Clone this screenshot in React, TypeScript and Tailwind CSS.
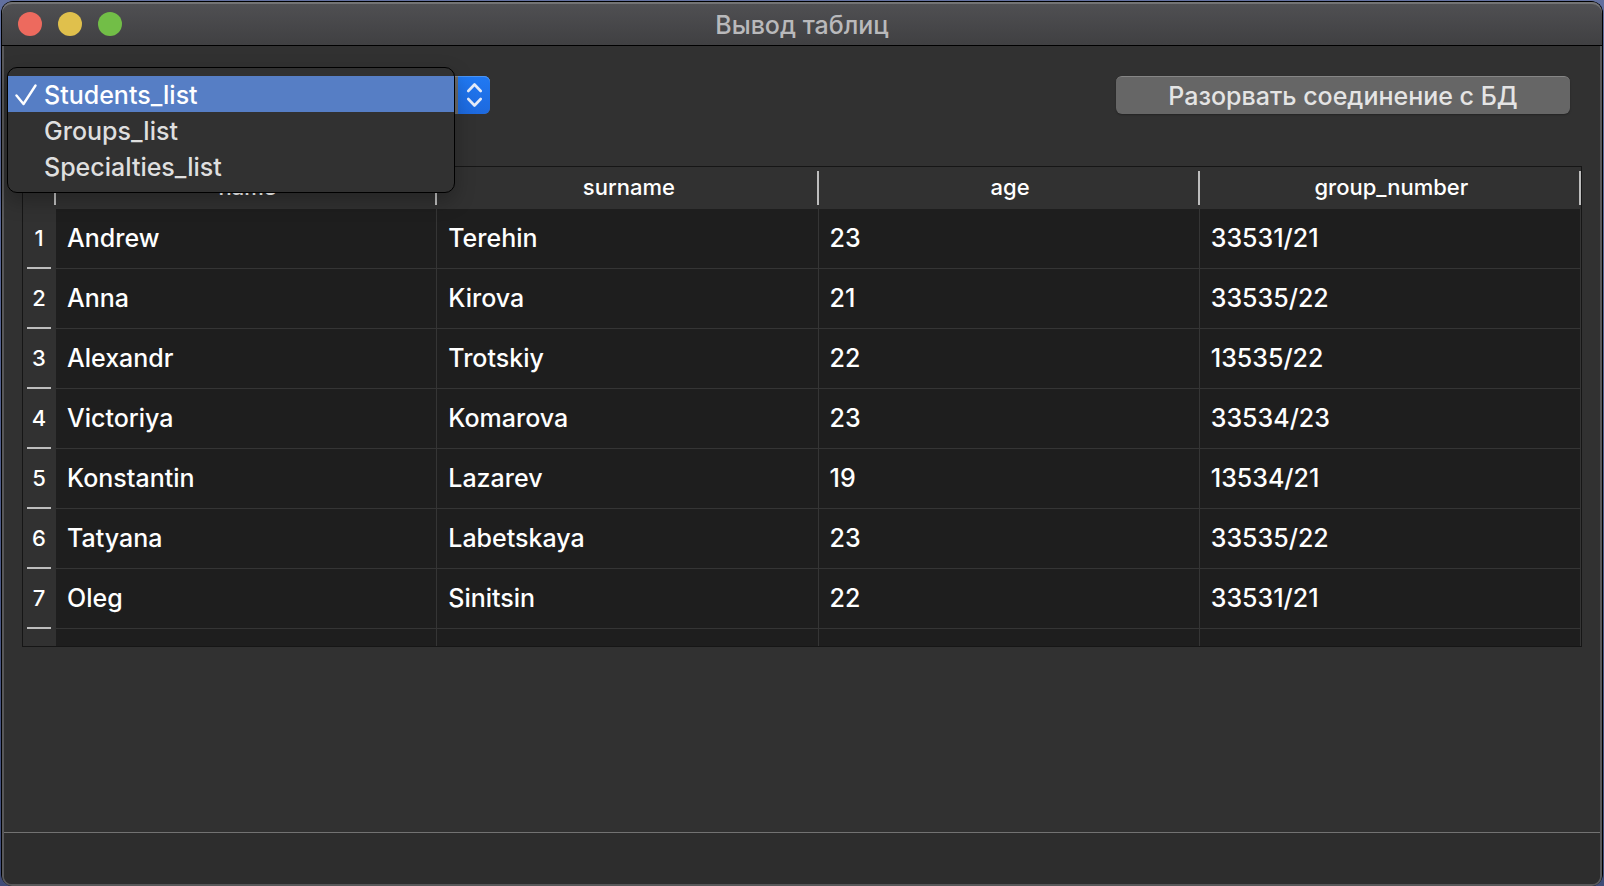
import { useState } from "react";

const tables = ["Students_list", "Groups_list", "Specialties_list"];

const columns = ["name", "surname", "age", "group_number"];

const students = [
  ["Andrew", "Terehin", "23", "33531/21"],
  ["Anna", "Kirova", "21", "33535/22"],
  ["Alexandr", "Trotskiy", "22", "13535/22"],
  ["Victoriya", "Komarova", "23", "33534/23"],
  ["Konstantin", "Lazarev", "19", "13534/21"],
  ["Tatyana", "Labetskaya", "23", "33535/22"],
  ["Oleg", "Sinitsin", "22", "33531/21"],
];

function TitleBar() {
  return (
    <header className="grid h-11 shrink-0 grid-cols-[1fr_auto_1fr] items-center rounded-t-[10px] border-b border-black bg-linear-to-b from-[#505053] to-[#404042] px-4 shadow-[inset_0_2px_0_#737375]">
      <div className="flex gap-4">
        <button aria-label="Закрыть" className="size-6 rounded-full bg-[#ed6a5e]" />
        <button aria-label="Свернуть" className="size-6 rounded-full bg-[#e0c04c]" />
        <button aria-label="Развернуть" className="size-6 rounded-full bg-[#72be47]" />
      </div>
      <h1 className="pt-0.5 text-[25px] leading-8 font-medium text-[#b9b9bb]">Вывод таблиц</h1>
    </header>
  );
}

function TablePicker() {
  const [selected, setSelected] = useState(tables[0]);
  return (
    <div className="relative w-[480px]">
      <select
        aria-label="Таблица"
        value={selected}
        onChange={(e) => setSelected(e.target.value)}
        className="block h-[38px] w-full appearance-none rounded-md border-t border-[#858585] bg-[#6b6b6b] px-8 text-transparent"
      >
        {tables.map((t) => (
          <option key={t}>{t}</option>
        ))}
      </select>
      <span className="pointer-events-none absolute inset-y-0 right-0 flex w-8 items-center justify-center rounded-r-md bg-linear-to-b from-[#2079f3] to-[#1d69de] shadow-[inset_0_1px_0_#4a94f4]">
        <svg width="16" height="26" viewBox="0 0 16 26" fill="none" stroke="#e4ebf8" strokeWidth="2.6" strokeLinecap="round" strokeLinejoin="round">
          <path d="M2.300 9 L8.500 2.500 L14.700 9 M2.300 17 L8.500 23.500 L14.700 17" />
        </svg>
      </span>
      <ul
        role="listbox"
        aria-label="Список таблиц"
        className="absolute -top-[9px] -left-[3px] z-10 w-[448px] rounded-[10px] border border-black bg-[#313131] py-2 shadow-[0_8px_20px_rgba(0,0,0,0.25)]"
      >
        {tables.map((t) => (
          <li key={t} role="option" aria-selected={t === selected}>
            <button
              onClick={() => setSelected(t)}
              className={
                t === selected
                  ? "flex h-9 w-full items-center bg-[#567ec5] pt-0.5 text-[25px] leading-8 font-medium text-white"
                  : "flex h-9 w-full items-center pt-0.5 text-[25px] leading-8 font-medium text-[#dfdfdf]"
              }
            >
              <span className="flex w-9 justify-center">
                {t === selected && (
                  <svg width="22" height="22" viewBox="0 0 22 22" fill="none" stroke="white" strokeWidth="2.4" strokeLinecap="round" strokeLinejoin="round">
                    <path d="M1.500 11.500 L8.500 20 L20.500 1.500" />
                  </svg>
                )}
              </span>
              {t}
            </button>
          </li>
        ))}
      </ul>
    </div>
  );
}

function StudentsTable() {
  return (
    <div className="border border-[#161616] bg-[#1e1e1e]">
      <table className="w-full table-fixed border-separate border-spacing-0 text-white">
        <thead className="bg-[#313131]">
          <tr>
            <th className="w-[33px] p-0 py-1">
              <div className="h-[34px] border-r-2 border-[#bdbdbd]" />
            </th>
            {columns.map((c) => (
              <th key={c} scope="col" className="p-0 py-1 text-[22px] font-medium">
                <div className="h-[34px] border-r-2 border-[#bdbdbd] pl-1 leading-8">{c}</div>
              </th>
            ))}
          </tr>
        </thead>
        <tbody>
          {students.map((row, i) => (
            <tr key={row[0]} className="h-[60px]">
              <th scope="row" className="bg-[#313131] p-0 pr-[5px] pl-1 text-[22px] font-medium">
                <div className="h-[60px] border-b-2 border-[#bdbdbd] leading-[58px]">{i + 1}</div>
              </th>
              {row.map((cell, j) => (
                <td key={j} className="border-r border-b border-[#353535] p-0 pb-0.5 pl-[11px] text-[25px] leading-8 font-medium">
                  {cell}
                </td>
              ))}
            </tr>
          ))}
          <tr className="h-[17px]">
            <td className="bg-[#313131] p-0" />
            {columns.map((c) => (
              <td key={c} className="border-r border-[#353535] p-0" />
            ))}
          </tr>
        </tbody>
      </table>
    </div>
  );
}

export default function App() {
  return (
    <div className="flex min-h-screen flex-col bg-linear-to-b from-[#62709f] to-[#3f4c78] px-px pt-px font-[Inter,'Liberation_Sans',sans-serif]">
      <div className="flex grow flex-col rounded-xl border border-b-0 border-black bg-[#313131]">
        <TitleBar />
        <div className="flex grow flex-col rounded-b-[10px] border-x-2 border-b-2 border-[#58585a]">
          <main className="grow px-[18px] pt-[30px]">
            <div className="mb-[52px] -ml-3 flex justify-between gap-4 pr-3">
              <TablePicker />
              <button className="h-[38px] w-[454px] rounded-md border-t border-[#868686] bg-[#666666] text-[25px] leading-8 font-medium text-[#e4e4e4] shadow-[0_1px_2px_rgba(0,0,0,0.3)]">
                Разорвать соединение с БД
              </button>
            </div>
            <StudentsTable />
          </main>
          <footer className="h-[52px] rounded-b-lg border-t border-[#727272] bg-[#2d2d2d]" />
        </div>
      </div>
    </div>
  );
}
